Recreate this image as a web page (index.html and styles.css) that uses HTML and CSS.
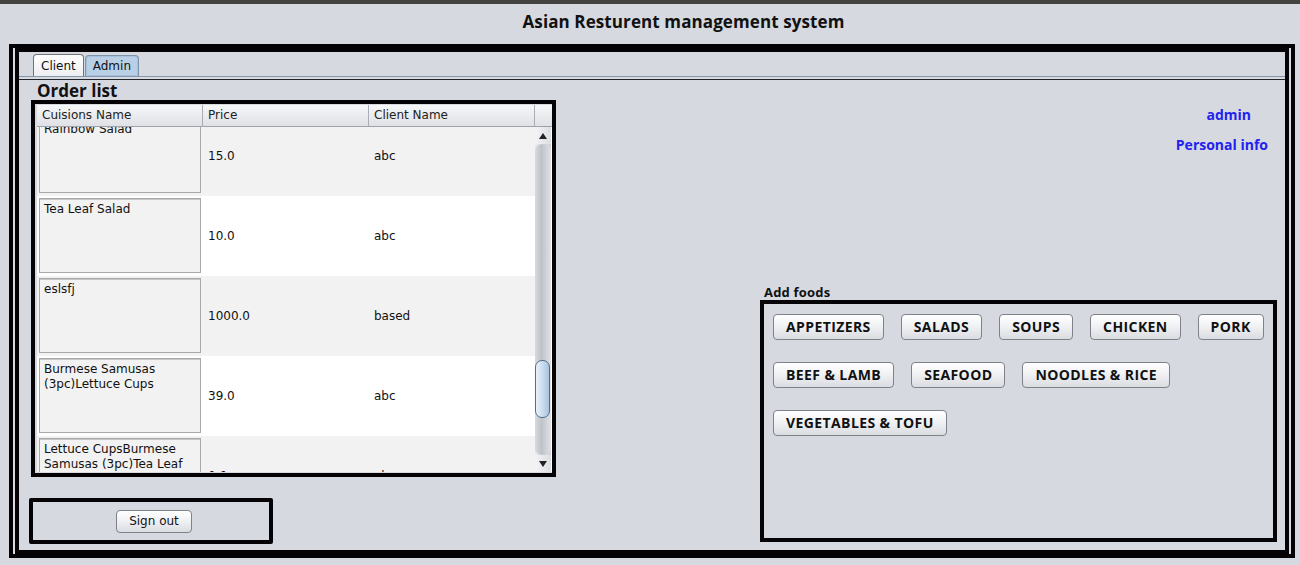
FILE: index.html
```html
<!DOCTYPE html>
<html lang="en">
<head>
<meta charset="utf-8">
<title>Asian Resturent management system</title>
<link rel="stylesheet" href="styles.css">
</head>
<body>
<div class="topstrip"></div>
<header class="titlebar"><h1 class="title">Asian Resturent management system</h1></header>
<div class="outer">
  <div class="inner">
    <div class="tabs">
      <div class="tab">Client</div>
      <div class="tab tab-active">Admin</div>
    </div>
    <div class="tabline"></div>
    <div class="main">
      <div class="leftcol">
        <div class="section-title">Order list</div>
        <div class="tablebox">
          <div class="grid">
            <div class="thead">
              <div class="th">Cuisions Name</div>
              <div class="th">Price</div>
              <div class="th">Client Name</div>
              <div class="th th-corner"></div>
            </div>
            <div class="tbody-wrap">
              <div class="tbody">
                <div class="rows">
                  <div class="row row-alt">
                    <div class="cell-name"><div class="namebox">Rainbow Salad</div></div>
                    <div class="cell">15.0</div>
                    <div class="cell">abc</div>
                  </div>
                  <div class="row">
                    <div class="cell-name"><div class="namebox">Tea Leaf Salad</div></div>
                    <div class="cell">10.0</div>
                    <div class="cell">abc</div>
                  </div>
                  <div class="row row-alt">
                    <div class="cell-name"><div class="namebox">eslsfj</div></div>
                    <div class="cell">1000.0</div>
                    <div class="cell">based</div>
                  </div>
                  <div class="row">
                    <div class="cell-name"><div class="namebox">Burmese Samusas (3pc)Lettuce Cups</div></div>
                    <div class="cell">39.0</div>
                    <div class="cell">abc</div>
                  </div>
                  <div class="row row-alt">
                    <div class="cell-name"><div class="namebox">Lettuce CupsBurmese Samusas (3pc)Tea Leaf Salad</div></div>
                    <div class="cell">0.0</div>
                    <div class="cell">abc</div>
                  </div>
                </div>
              </div>
              <div class="scrollbar">
                <div class="sb-btn sb-up"><svg width="8" height="6" viewBox="0 0 8 6"><path d="M4 0 L8 6 L0 6 Z" fill="#222"/></svg></div>
                <div class="sb-track">
                  <div class="sb-thumb"></div>
                </div>
                <div class="sb-btn sb-down"><svg width="8" height="6" viewBox="0 0 8 6"><path d="M0 0 L8 0 L4 6 Z" fill="#222"/></svg></div>
              </div>
            </div>
          </div>
        </div>
        <div class="signoutbox">
          <button class="btn btn-signout">Sign out</button>
        </div>
      </div>
      <div class="rightcol">
        <div class="links">
          <a class="link link-admin">admin</a>
          <a class="link link-info">Personal info</a>
        </div>
        <div class="foods">
          <div class="foods-label">Add foods</div>
          <div class="foodsbox">
            <button class="btn food">APPETIZERS</button>
            <button class="btn food">SALADS</button>
            <button class="btn food">SOUPS</button>
            <button class="btn food">CHICKEN</button>
            <button class="btn food">PORK</button>
            <button class="btn food">BEEF &amp; LAMB</button>
            <button class="btn food">SEAFOOD</button>
            <button class="btn food">NOODLES &amp; RICE</button>
            <button class="btn food">VEGETABLES &amp; TOFU</button>
          </div>
        </div>
      </div>
    </div>
  </div>
</div>
</body>
</html>
```
FILE: styles.css
```css
* { box-sizing: border-box; }
html, body { margin: 0; padding: 0; }
body {
  background: #d6d9e0;
  width: 1300px;
  height: 565px;
  overflow: hidden;
  font-family: "DejaVu Sans", "Liberation Sans", sans-serif;
  font-size: 12px;
  color: #111;
}
.topstrip { height: 4px; background: #45433f; }
.titlebar {
  height: 40px;
  display: flex;
  align-items: center;
  justify-content: center;
  padding-left: 67px;
}
.title {
  margin: 0;
  font-family: "Open Sans", "DejaVu Sans", sans-serif;
  font-weight: 700;
  font-size: 17px;
  letter-spacing: 0.1px;
  line-height: 20px;
  color: #111;
  padding-bottom: 4px;
}
.outer {
  margin-left: 9px;
  width: 1286px;
  height: 514px;
  border: 4px solid #050305;
  padding: 0 2px;
}
.inner {
  height: 100%;
  border: 4px solid #050305;
  display: flex;
  flex-direction: column;
}
.tabs {
  height: 25px;
  display: flex;
  align-items: flex-end;
  padding-left: 14px;
  border-bottom: 1px solid #8496ad;
}
.tab {
  height: 22px;
  padding: 0 7px;
  line-height: 22px;
  font-size: 12px;
  color: #111;
  background: linear-gradient(#ffffff, #eceef1);
  border: 1px solid #6f7276;
  border-bottom: none;
  border-radius: 4px 4px 0 0;
}
.tab-active {
  margin-left: 1px;
  background: #b9cfe6;
  border: 1px solid #7d93ab;
  box-shadow: inset 0 0 0 1px #a7c2de;
  border-bottom: none;
  height: 21px;
  line-height: 20px;
}
.tabline {
  margin-top: 2px;
  border-top: 1px solid #20242a;
}
.main {
  flex: 1;
  display: flex;
}
.leftcol {
  width: 537px;
  padding-left: 10px;
  display: flex;
  flex-direction: column;
}
.section-title {
  margin-left: 8px;
  margin-top: 1px;
  font-family: "Open Sans", "DejaVu Sans", sans-serif;
  font-weight: 700;
  font-size: 17px;
  line-height: 19px;
  color: #111;
}
.tablebox {
  margin-left: 2px;
  width: 525px;
  height: 377px;
  border: 4px solid #050305;
  padding: 1px 0 1px 2px;
  background: #d6d9e0;
}
.grid {
  height: 100%;
  display: flex;
  flex-direction: column;
  background: #fff;
}
.thead {
  height: 22px;
  display: flex;
  background: linear-gradient(#f6f7f8, #dfe1e6);
  border-bottom: 1px solid #9ea3ab;
}
.th {
  width: 166px;
  padding-left: 5px;
  line-height: 21px;
  color: #222;
  border-right: 1px solid #a9aeb6;
}
.th-corner { width: 16px; padding: 0; border-right: none; }
.tbody-wrap {
  flex: 1;
  display: flex;
  overflow: hidden;
}
.tbody {
  width: 498px;
  overflow: hidden;
}
.rows { margin-top: -11px; }
.row {
  height: 80px;
  display: flex;
  background: #ffffff;
}
.row-alt { background: #f2f2f2; }
.cell-name {
  width: 166px;
  padding: 2px 2px 3px 2px;
  background: #ffffff;
}
.row-alt .cell-name { background: #f2f2f2; }
.namebox {
  height: 100%;
  background: #f2f2f2;
  border: 1px solid #a9a9a9;
  box-shadow: inset 0 1px 0 #c6c6c6;
  padding: 3px 4px;
  line-height: 15px;
  color: #111;
}
.cell {
  width: 166px;
  padding-left: 5px;
  display: flex;
  align-items: center;
  color: #111;
}
.scrollbar {
  width: 16px;
  display: flex;
  flex-direction: column;
  background: linear-gradient(90deg, #e9ebee, #cfd2d8);
}
.sb-btn {
  height: 17px;
  display: flex;
  align-items: center;
  justify-content: center;
  background: linear-gradient(90deg, #f3f4f6, #dcdee2);
}
.sb-track {
  flex: 1;
  position: relative;
  background: linear-gradient(90deg, #d7dade, #bfc3c9 40%, #dfe1e5);
  border-radius: 8px / 6px;
}
.sb-thumb {
  position: absolute;
  left: 0;
  right: 1px;
  top: 216px;
  height: 58px;
  border: 1px solid #4f6f8f;
  border-radius: 7px;
  background: linear-gradient(90deg, #eaf2fa, #c4d8ec 60%, #a9c3dc);
}
.signoutbox {
  margin-top: 21px;
  width: 244px;
  height: 46px;
  border: 4px solid #050305;
  border-radius: 2px;
  display: flex;
  align-items: center;
  justify-content: center;
  padding-left: 6px;
}
.btn {
  font-family: inherit;
  cursor: pointer;
  background: linear-gradient(#ffffff, #f1f2f4 45%, #dadce1);
  border: 1px solid #7f8288;
  border-radius: 4px;
  color: #111;
  padding: 0;
}
.btn-signout {
  width: 76px;
  height: 23px;
  font-size: 12px;
  line-height: 20px;
}
.rightcol {
  flex: 1;
  display: flex;
  flex-direction: column;
  align-items: flex-end;
}
.links {
  margin-top: 26px;
  display: flex;
  flex-direction: column;
  align-items: flex-end;
}
.link {
  font-family: "Open Sans", "DejaVu Sans", sans-serif;
  font-weight: 700;
  font-size: 14px;
  line-height: 18px;
  color: #2222ee;
  text-decoration: none;
}
.link-admin { margin-right: 34px; }
.link-info { margin-right: 17px; margin-top: 12px; }
.foods {
  margin-top: 130px;
  margin-right: 8px;
  width: 517px;
}
.foods-label {
  padding-left: 4px;
  font-family: "Open Sans", "DejaVu Sans", sans-serif;
  font-weight: 700;
  font-size: 13px;
  line-height: 16px;
  color: #111;
  letter-spacing: 0.2px;
}
.foodsbox {
  height: 242px;
  border: 4px solid #050305;
  padding: 10px 0 0 9px;
  display: flex;
  flex-wrap: wrap;
  align-content: flex-start;
  column-gap: 17px;
  row-gap: 22px;
}
.food {
  height: 26px;
  padding: 0 12px;
  font-family: "Open Sans", "DejaVu Sans", sans-serif;
  font-weight: 700;
  font-size: 14px;
  letter-spacing: 0.4px;
  line-height: 24px;
  color: #111;
}
```
